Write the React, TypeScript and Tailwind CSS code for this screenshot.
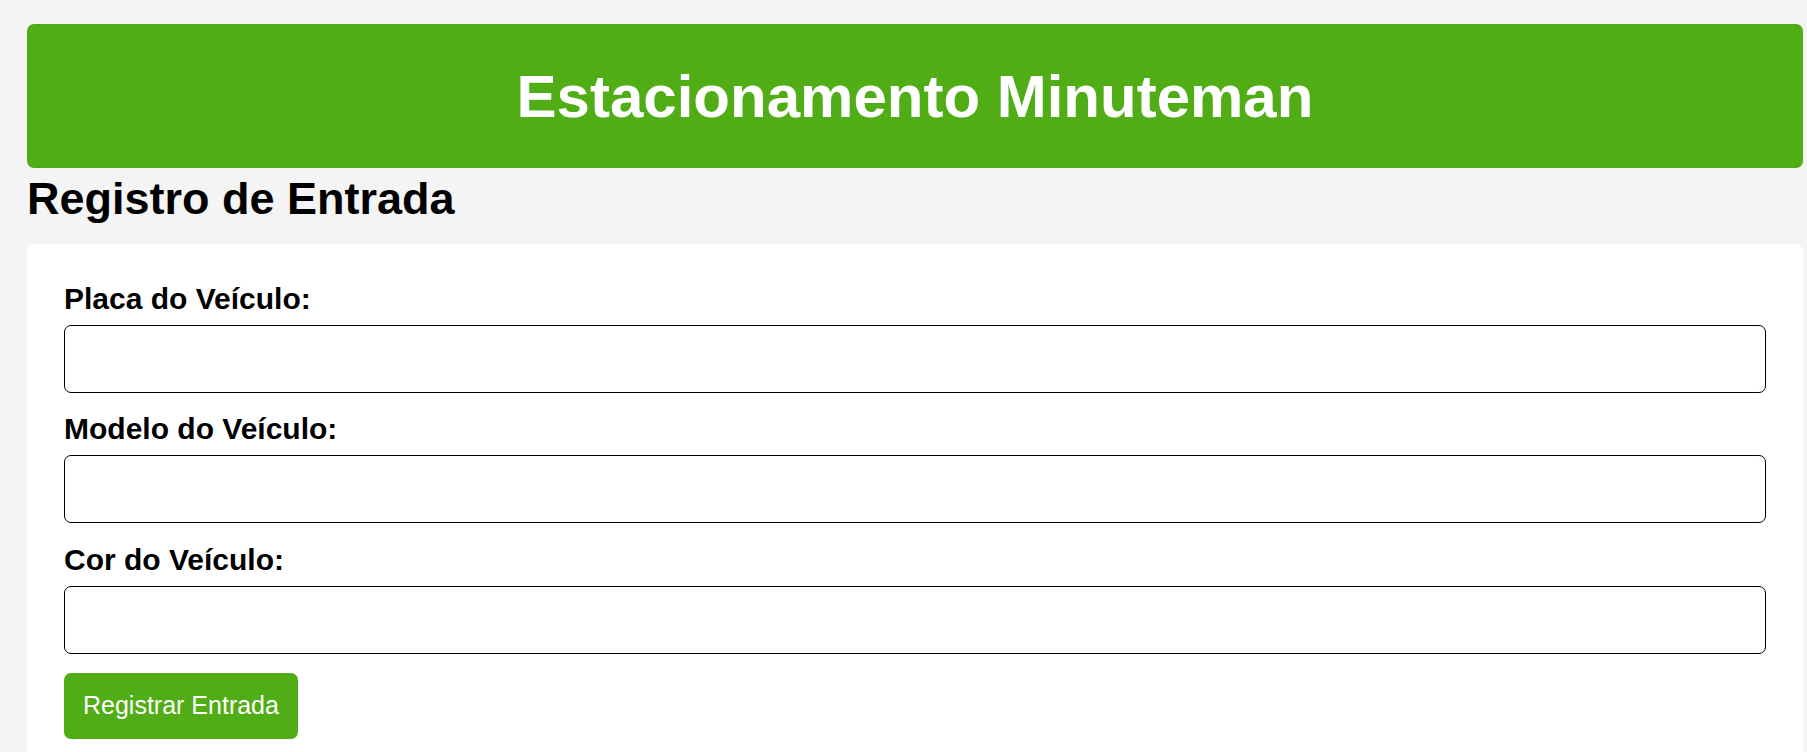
export default function App() {
  return (
    <div className="min-h-screen bg-[#f4f4f4] pt-[24px] pl-[27px] pr-[4px] font-['Liberation_Sans',Arial,sans-serif] text-black">
      <header className="flex h-[144px] items-center justify-center rounded-[7px] bg-[#50ad15]">
        <h1 className="text-[60px] font-bold leading-[69px] whitespace-nowrap text-white">Estacionamento Minuteman</h1>
      </header>

      <h2 className="mt-[5px] mb-[19px] text-[45px] font-bold leading-[52px]">Registro de Entrada</h2>

      <form className="rounded-[7px] bg-white px-[37px] pt-[37.5px] pb-[37px]" onSubmit={(e) => e.preventDefault()}>
        <Field id="placa" label="Placa do Veículo:" />
        <Field id="modelo" label="Modelo do Veículo:" />
        <Field id="cor" label="Cor do Veículo:" />
        <button
          type="submit"
          className="h-[66px] rounded-[7px] bg-[#50ad15] px-[19px] text-[25px] text-white"
        >
          Registrar Entrada
        </button>
      </form>
    </div>
  );
}

function Field({ id, label }: { id: string; label: string }) {
  return (
    <div className="mb-[19.5px]">
      <label htmlFor={id} className="mb-[9px] block text-[30px] font-bold leading-[34px]">
        {label}
      </label>
      <input id={id} type="text" className="block h-[68px] w-full rounded-[7px] border border-black bg-white px-[15px] text-[30px]" />
    </div>
  );
}
